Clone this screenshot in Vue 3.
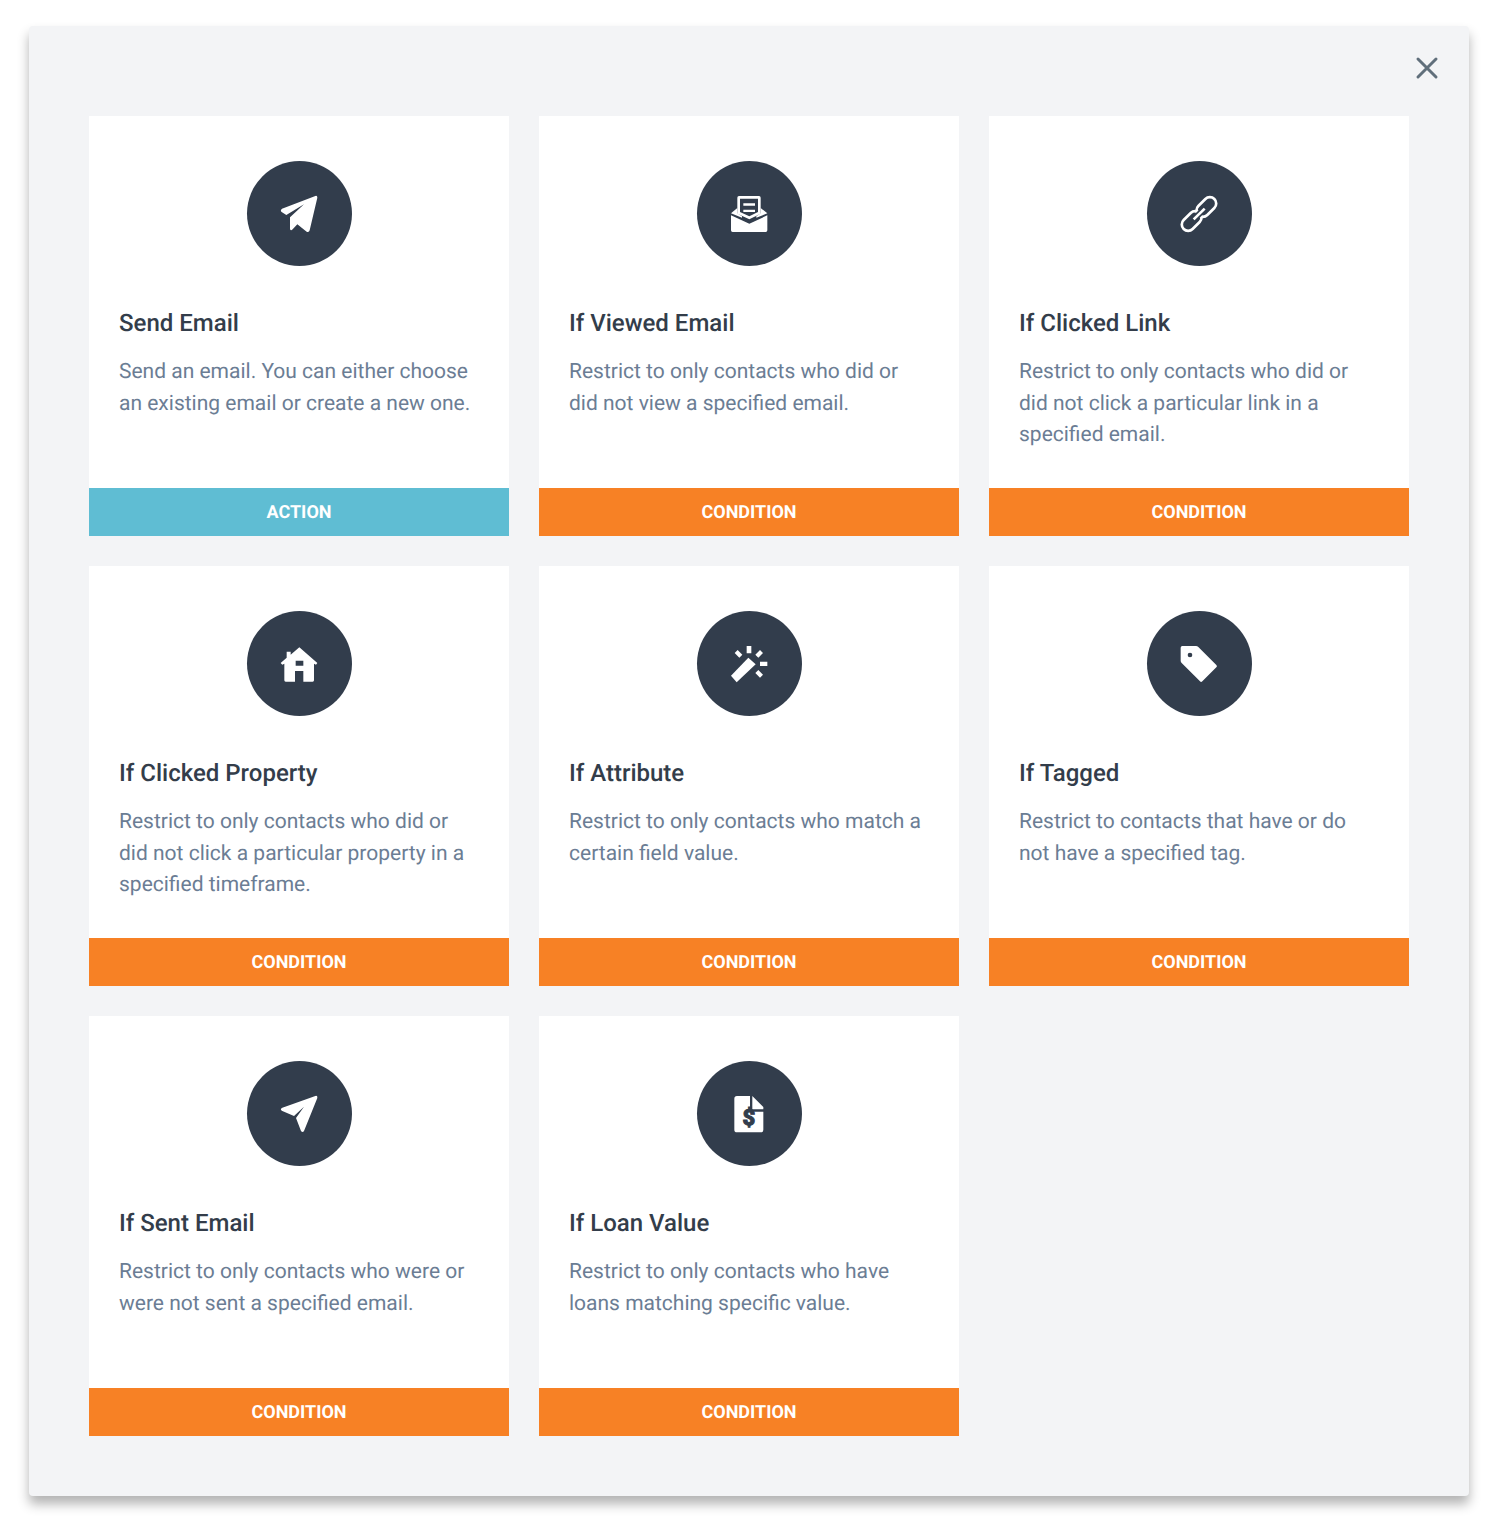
<script setup>
const cards = [
  { icon: 'send', title: 'Send Email', text: 'Send an email. You can either choose an existing email or create a new one.', kind: 'action' },
  { icon: 'viewed', title: 'If Viewed Email', text: 'Restrict to only contacts who did or did not view a specified email.', kind: 'condition' },
  { icon: 'link', title: 'If Clicked Link', text: 'Restrict to only contacts who did or did not click a particular link in a specified email.', kind: 'condition' },
  { icon: 'home', title: 'If Clicked Property', text: 'Restrict to only contacts who did or did not click a particular property in a specified timeframe.', kind: 'condition' },
  { icon: 'wand', title: 'If Attribute', text: 'Restrict to only contacts who match a certain field value.', kind: 'condition' },
  { icon: 'tag', title: 'If Tagged', text: 'Restrict to contacts that have or do not have a specified tag.', kind: 'condition' },
  { icon: 'sent', title: 'If Sent Email', text: 'Restrict to only contacts who were or were not sent a specified email.', kind: 'condition' },
  { icon: 'loan', title: 'If Loan Value', text: 'Restrict to only contacts who have loans matching specific value.', kind: 'condition' },
];
</script>

<template>
  <div class="modal">
    <button class="close" aria-label="Close">
      <svg width="24" height="24" viewBox="0 0 24 24">
        <path d="M3 3L21 21M21 3L3 21" />
      </svg>
    </button>
    <div class="grid">
      <div v-for="card in cards" :key="card.title" class="card">
        <div class="body">
          <div class="circle">
            <svg width="105" height="105" viewBox="21 18 315 315" fill="#fff">
              <path v-if="card.icon === 'send'" d="M226 123L126 161Q119 167 126 172L139 180L192 148L150 187L150 222Q152 229 158 223L172 208L200 230Q207 233 209 226L232 128Q232 121 226 123Z" />
              <g v-else-if="card.icon === 'viewed'">
                <path d="M123 181L178 206L232 181V226Q232 231 227 231H128Q123 231 123 226Z" />
                <path d="M123 175L142 159V175L156 184V188ZM232 175L212 159V175L199 184V188Z" />
                <path fill-rule="evenodd" d="M147 123H207Q212 123 212 128V176L178 193L142 176V128Q142 123 147 123ZM150 131V171L178 184L204 171V131Z" />
                <path d="M160 145H195V152H160ZM160 164H195V171H160Z" />
              </g>
              <g v-else-if="card.icon === 'link'" fill="none" stroke="#fff" stroke-width="8">
                <rect x="165" y="137" width="68" height="38" rx="19" transform="rotate(-45 199 156)" />
                <rect x="121" y="179" width="68" height="38" rx="19" transform="rotate(-45 155 198)" />
                <path d="M164 190L191 164" stroke="#323d4c" stroke-width="18" />
                <path d="M161 193L194 161" />
              </g>
              <path v-else-if="card.icon === 'home'" fill-rule="evenodd" d="M178 127L232 174L228 179L222 176V226Q222 230 218 230H190V198H165V230H137Q133 230 133 226V176L127 179L122 174L140 158V140H152V149ZM167 167V182H190V167Z" />
              <g v-else-if="card.icon === 'wand'">
                <path d="M123 212L175 158L197 178L140 232Z" />
                <path d="M170 123H184V145H170ZM210 170H232V183H210Z" />
                <path d="M143 135L157 149L148 158L134 144ZM210 135L219 144L205 158L196 149ZM205 195L219 209L210 218L196 204Z" />
              </g>
              <path v-else-if="card.icon === 'tag'" fill-rule="evenodd" d="M127 123H168Q172 123 175 126L229 180Q233 184 229 187L187 229Q183 233 180 229L125 174Q122 171 122 167V128Q122 123 127 123ZM150 143A7 7 0 1 0 150 157A7 7 0 1 0 150 143Z" />
              <path v-else-if="card.icon === 'sent'" d="M226 123L127 158Q118 163 127 168L162 183L192 155L168 189L183 228Q188 234 192 228L232 129Q233 121 226 123Z" />
              <g v-else-if="card.icon === 'loan'">
                <path d="M141 123H180V170H220V224Q220 232 212 232H141Q133 232 133 224V131Q133 123 141 123Z" />
                <path d="M187 123L220 156V163H187Z" />
                <text x="177" y="209" text-anchor="middle" class="dollar">$</text>
              </g>
            </svg>
          </div>
          <h3 class="title">{{ card.title }}</h3>
          <p class="text">{{ card.text }}</p>
        </div>
        <div class="tag" :class="card.kind">{{ card.kind }}</div>
      </div>
    </div>
  </div>
</template>

<style scoped>
.modal {
  position: relative;
  box-sizing: border-box;
  width: 1440px;
  height: 1470px;
  margin: 26px auto 0;
  padding: 90px 60px 60px;
  background: #f3f4f6;
  border-radius: 4px;
  box-shadow: 0 8px 12px rgba(0, 0, 0, 0.3);
  font-family: Roboto, sans-serif;
  text-rendering: geometricPrecision;
}

.close {
  position: absolute;
  top: 30px;
  right: 30px;
  width: 24px;
  height: 24px;
  padding: 0;
  border: 0;
  background: none;
  cursor: pointer;
}

.close svg {
  display: block;
}

.close path {
  fill: none;
  stroke: #606f7b;
  stroke-width: 3;
  stroke-linecap: round;
}

.grid {
  display: grid;
  grid-template-columns: repeat(3, 420px);
  grid-auto-rows: 420px;
  gap: 30px;
}

.card {
  display: flex;
  flex-direction: column;
  background: #fff;
}

.body {
  flex: 1;
  padding: 45px 30px 0;
}

.circle {
  width: 105px;
  height: 105px;
  margin: 0 auto;
  border-radius: 50%;
  background: #323d4c;
}

.circle svg {
  display: block;
}

.dollar {
  font-family: Roboto, sans-serif;
  font-size: 66px;
  font-weight: 900;
  fill: #323d4c;
  stroke: #323d4c;
  stroke-width: 3px;
}

.title {
  margin: 39px 0 16px;
  font-size: 24px;
  line-height: 36px;
  font-weight: 500;
  color: #333d4a;
}

.text {
  margin: 0;
  font-size: 21px;
  line-height: 31.5px;
  color: #6b7d94;
}

.tag {
  height: 48px;
  line-height: 50px;
  text-align: center;
  text-transform: uppercase;
  font-size: 18px;
  font-weight: 700;
  color: #fff;
}

.action {
  background: #5fbdd3;
}

.condition {
  background: #f78125;
}
</style>

<style>
html,
body {
  background: #fff;
}

body {
  min-height: 1538px;
}
</style>
